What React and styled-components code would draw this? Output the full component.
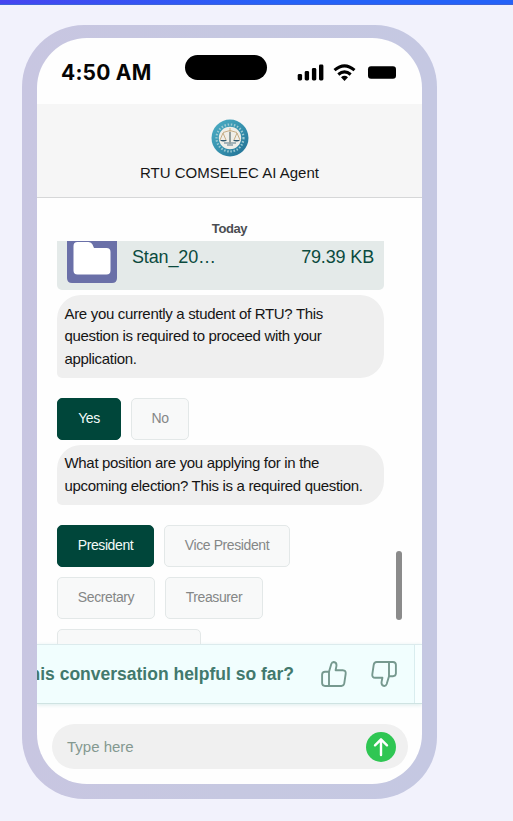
import React from "react";
import styled, { createGlobalStyle } from "styled-components";

const GlobalStyle = createGlobalStyle`
  * { box-sizing: border-box; }
  html, body { margin: 0; height: 100%; background: #f2f2fc; }
  body { font-family: "Liberation Sans", Arial, sans-serif; overflow: hidden; }
`;

const Page = styled.main`
  height: 821px;
  width: 513px;
  background: #f2f2fc;
  overflow: hidden;
`;

const AccentBar = styled.div`
  height: 5px;
  background: linear-gradient(90deg, #4645f0, #2563f8 55%, #2563f8);
  border-bottom: 1px solid #3e64d8;
`;

const Phone = styled.section`
  width: 415px;
  height: 774px;
  margin: 20px 0 0 22px;
  padding: 13px 15px 15px;
  border-radius: 62px;
  background: linear-gradient(90deg, #c8c6e1, #c6c8e1 50%, #c5c8e2);
`;

const Screen = styled.div`
  display: flex;
  flex-direction: column;
  height: 100%;
  border-radius: 50px;
  overflow: hidden;
  background: #fefefe;
`;

const StatusBar = styled.div`
  display: flex;
  align-items: flex-start;
  height: 66px;
  flex: none;
  padding: 18px 26px 0 24px;
`;

const Clock = styled.div`
  width: 124px;
  padding-top: 1px;
  font: 700 21px/32px Inter, sans-serif;
  letter-spacing: 0.2px;
  white-space: nowrap;
  color: #050505;
`;

const Island = styled.div`
  width: 82px;
  height: 25px;
  margin-top: -1px;
  border-radius: 13px;
  background: #000;
`;

const StatusIcons = styled.svg`
  display: block;
  width: 100px;
  height: 20px;
  margin: 6px 0 0 auto;
`;

const Header = styled.header`
  display: flex;
  flex: none;
  flex-direction: column;
  align-items: center;
  height: 94px;
  padding-top: 15px;
  background: #f6f6f6;
  border-bottom: 1px solid #d6d7d8;
`;

const Seal = styled.svg`
  display: block;
  width: 38px;
  height: 38px;
`;

const AgentName = styled.h1`
  margin: 6px 0 0;
  font-size: 15px;
  line-height: 20px;
  font-weight: 400;
  color: #161616;
`;

const DayLabel = styled.div`
  flex: none;
  height: 43px;
  padding-top: 21px;
  font-size: 13px;
  line-height: 20px;
  font-weight: 700;
  letter-spacing: -0.4px;
  text-align: center;
  color: #4b4d52;
`;

const Messages = styled.div`
  position: relative;
  height: 403px;
  flex: none;
  overflow: hidden;
  padding: 0 38px 0 20px;
`;

const ScrollThumb = styled.div`
  position: absolute;
  right: 20px;
  top: 310px;
  width: 6px;
  height: 69px;
  border-radius: 3px;
  background: #8b8b8b;
`;

const FileCard = styled.div`
  display: flex;
  align-items: flex-start;
  width: 327px;
  height: 49px;
  padding: 0 10px;
  border-radius: 0 0 5px 5px;
  background: #e4eae9;
`;

const FolderTile = styled.svg`
  display: block;
  width: 50px;
  height: 42px;
`;

const FileText = styled.div`
  margin-left: ${(p) => (p.$end ? "auto" : "15px")};
  padding-top: 4px;
  font-size: 18px;
  line-height: 24px;
  letter-spacing: -0.15px;
  color: #0b4a3e;
`;

const Bubble = styled.p`
  width: 327px;
  margin: 5px 0 0;
  padding: 7.5px;
  border-radius: 24px 24px 24px 5px;
  background: #efefef;
  font-size: 15px;
  line-height: 22.5px;
  letter-spacing: -0.32px;
  white-space: nowrap;
  color: #151515;
`;

const Choices = styled.div`
  display: flex;
  flex-wrap: wrap;
  gap: 10px;
  margin-top: 20px;
`;

const Choice = styled.button`
  width: ${(p) => p.$w}px;
  height: 42px;
  padding: 0 0 2px;
  border: 1px solid ${(p) => (p.$on ? "#00463a" : "#e3e8e8")};
  border-radius: 5px;
  background: ${(p) => (p.$on ? "#00463a" : "#f8f9f9")};
  color: ${(p) => (p.$on ? "#f3fbf8" : "#858787")};
  font: 14px "Liberation Sans", Arial, sans-serif;
  letter-spacing: -0.4px;
`;

const FeedbackStrip = styled.div`
  flex: none;
  height: 60px;
  padding-right: 7px;
  background: #f7ffff;
  border-top: 1px solid #dcebed;
  border-bottom: 1px solid #cfe3e2;
  box-shadow: 0 1px 4px #dcecec;
`;

const Feedback = styled.div`
  display: flex;
  align-items: center;
  justify-content: flex-end;
  height: 100%;
  padding-right: 16px;
  border-right: 1px solid #d9edef;
  background: #f1fefe;
`;

const Question = styled.div`
  flex: none;
  margin-right: 26px;
  font-size: 17.5px;
  font-weight: 700;
  white-space: nowrap;
  color: #42796d;
`;

const Vote = styled.button`
  display: flex;
  flex: none;
  padding: 0;
  margin-left: ${(p) => p.$gap || 0}px;
  border: 0;
  background: none;
  color: #76998f;
`;

const ThumbSvg = styled.svg`
  display: block;
  width: 28px;
  height: 28px;
  transform: ${(p) => (p.$down ? "rotate(180deg)" : "none")};
`;

const Composer = styled.div`
  display: flex;
  align-items: center;
  justify-content: space-between;
  flex: none;
  height: 45px;
  margin: 20px 14px 0 15px;
  padding: 0 12px 0 15px;
  border-radius: 23px;
  background: #f0f0f0;
  font-size: 15px;
  letter-spacing: 0;
  color: #849990;
`;

const Send = styled.button`
  display: flex;
  padding: 0;
  border: 0;
  background: none;
`;

const POSITIONS = [
  ["President", 97, true],
  ["Vice President", 126],
  ["Secretary", 98],
  ["Treasurer", 98],
  ["", 144],
];

function Thumb({ down }) {
  return (
    <ThumbSvg
      $down={down}
      viewBox="0 0 28 28"
      fill="none"
      stroke="currentColor"
      strokeWidth="1.9"
      strokeLinejoin="round"
      strokeLinecap="round"
    >
      <path d="M9 11.800 11.300 4Q12 2 13.700 2q3 .3 2.800 3.600l-.9 4.600h7.200q3.300.2 2.900 3.400l-1.400 9.600q-.5 2.800-3 2.800H5q-2.700 0-2.900-2.700V14.500q.2-2.700 2.900-2.700zV26" />
    </ThumbSvg>
  );
}

function Emblem() {
  return (
    <Seal viewBox="0 0 38 38">
      <defs>
        <linearGradient id="rim" x1="0" y1="0" x2="1" y2="1">
          <stop offset="0" stopColor="#4fb0c6" />
          <stop offset="0.55" stopColor="#348fac" />
          <stop offset="1" stopColor="#1f6c91" />
        </linearGradient>
      </defs>
      <circle cx="19" cy="19" r="18.5" fill="url(#rim)" />
      <circle cx="19" cy="19" r="13.5" fill="none" stroke="#9ccad3" strokeWidth="2.2" strokeDasharray="1.5 1.7" />
      <circle cx="19" cy="19" r="11.2" fill="#f0eee8" />
      <path d="M19 9v16M12 13.5l7-2 7 2M12 14l-3 7M12 14l3 7M26 14l-3 7M26 14l3 7" fill="none" stroke="#c1a57a" strokeWidth="0.9" />
      <path d="M8.800 21h7.400q-3.700 3.200-7.400 0M21.800 21h7.400q-3.700 3.200-7.400 0" fill="#30576c" />
      <path d="M19 13v10M13 24h12M16 26h6" stroke="#567889" strokeWidth="1.1" />
    </Seal>
  );
}

export default function App() {
  return (
    <Page>
      <GlobalStyle />
      <AccentBar />
      <Phone>
        <Screen>
          <StatusBar>
            <Clock>4:50 AM</Clock>
            <Island />
            <StatusIcons viewBox="0 0 100 20">
              <rect x="1.700" y="12" width="4.400" height="6.500" rx="1.400" />
              <rect x="8.700" y="9" width="4.400" height="9.500" rx="1.400" />
              <rect x="15.900" y="6" width="4.400" height="12.500" rx="1.400" />
              <rect x="23" y="2.500" width="4.400" height="16" rx="1.400" />
              <g fill="none" stroke="#000" strokeWidth="3">
                <path d="M38.500 8.200q10-8.700 20 0" />
                <path d="M42.300 12.500q6.200-5.300 12.400 0" />
              </g>
              <path d="M45 15.200q3.500-2.800 7 0L48.500 19z" />
              <rect x="72" y="4.200" width="28" height="12.600" rx="3" />
            </StatusIcons>
          </StatusBar>
          <Header>
            <Emblem />
            <AgentName>RTU COMSELEC AI Agent</AgentName>
          </Header>
          <DayLabel>Today</DayLabel>
          <Messages>
            <FileCard>
              <FolderTile viewBox="0 0 50 42">
                <path d="M0 0h50v37q0 5-5 5H5q-5 0-5-5z" fill="#6a70a8" />
                <path d="M6.500 5q0-4 4-4h11q3 0 4 2.500l1.500 3.500h12.500q4 0 4 4v18.500q0 4-4 4h-29q-4 0-4-4z" fill="#fff" />
              </FolderTile>
              <FileText>Stan_20…</FileText>
              <FileText $end>79.39 KB</FileText>
            </FileCard>
            <Bubble>
              Are you currently a student of RTU? This
              <br />
              question is required to proceed with your
              <br />
              application.
            </Bubble>
            <Choices>
              <Choice $w={64} $on>Yes</Choice>
              <Choice $w={58}>No</Choice>
            </Choices>
            <Bubble>
              What position are you applying for in the
              <br />
              upcoming election? This is a required question.
            </Bubble>
            <Choices>
              {POSITIONS.map(([label, width, on]) => (
                <Choice key={width + label} $w={width} $on={on}>{label}</Choice>
              ))}
            </Choices>
            <ScrollThumb />
          </Messages>
          <FeedbackStrip>
            <Feedback>
              <Question>Was this conversation helpful so far?</Question>
              <Vote aria-label="Helpful">
                <Thumb />
              </Vote>
              <Vote $gap={22} aria-label="Not helpful">
                <Thumb down />
              </Vote>
            </Feedback>
          </FeedbackStrip>
          <Composer>
            <span>Type here</span>
            <Send aria-label="Send">
              <svg width="30" height="30" viewBox="0 0 30 30">
                <circle cx="15" cy="15" r="15" fill="#2fc653" />
                <path d="M15 23V7.500M9 13.300l6-6 6 6" fill="none" stroke="#fff" strokeWidth="2.400" strokeLinecap="round" strokeLinejoin="round" />
              </svg>
            </Send>
          </Composer>
        </Screen>
      </Phone>
    </Page>
  );
}
